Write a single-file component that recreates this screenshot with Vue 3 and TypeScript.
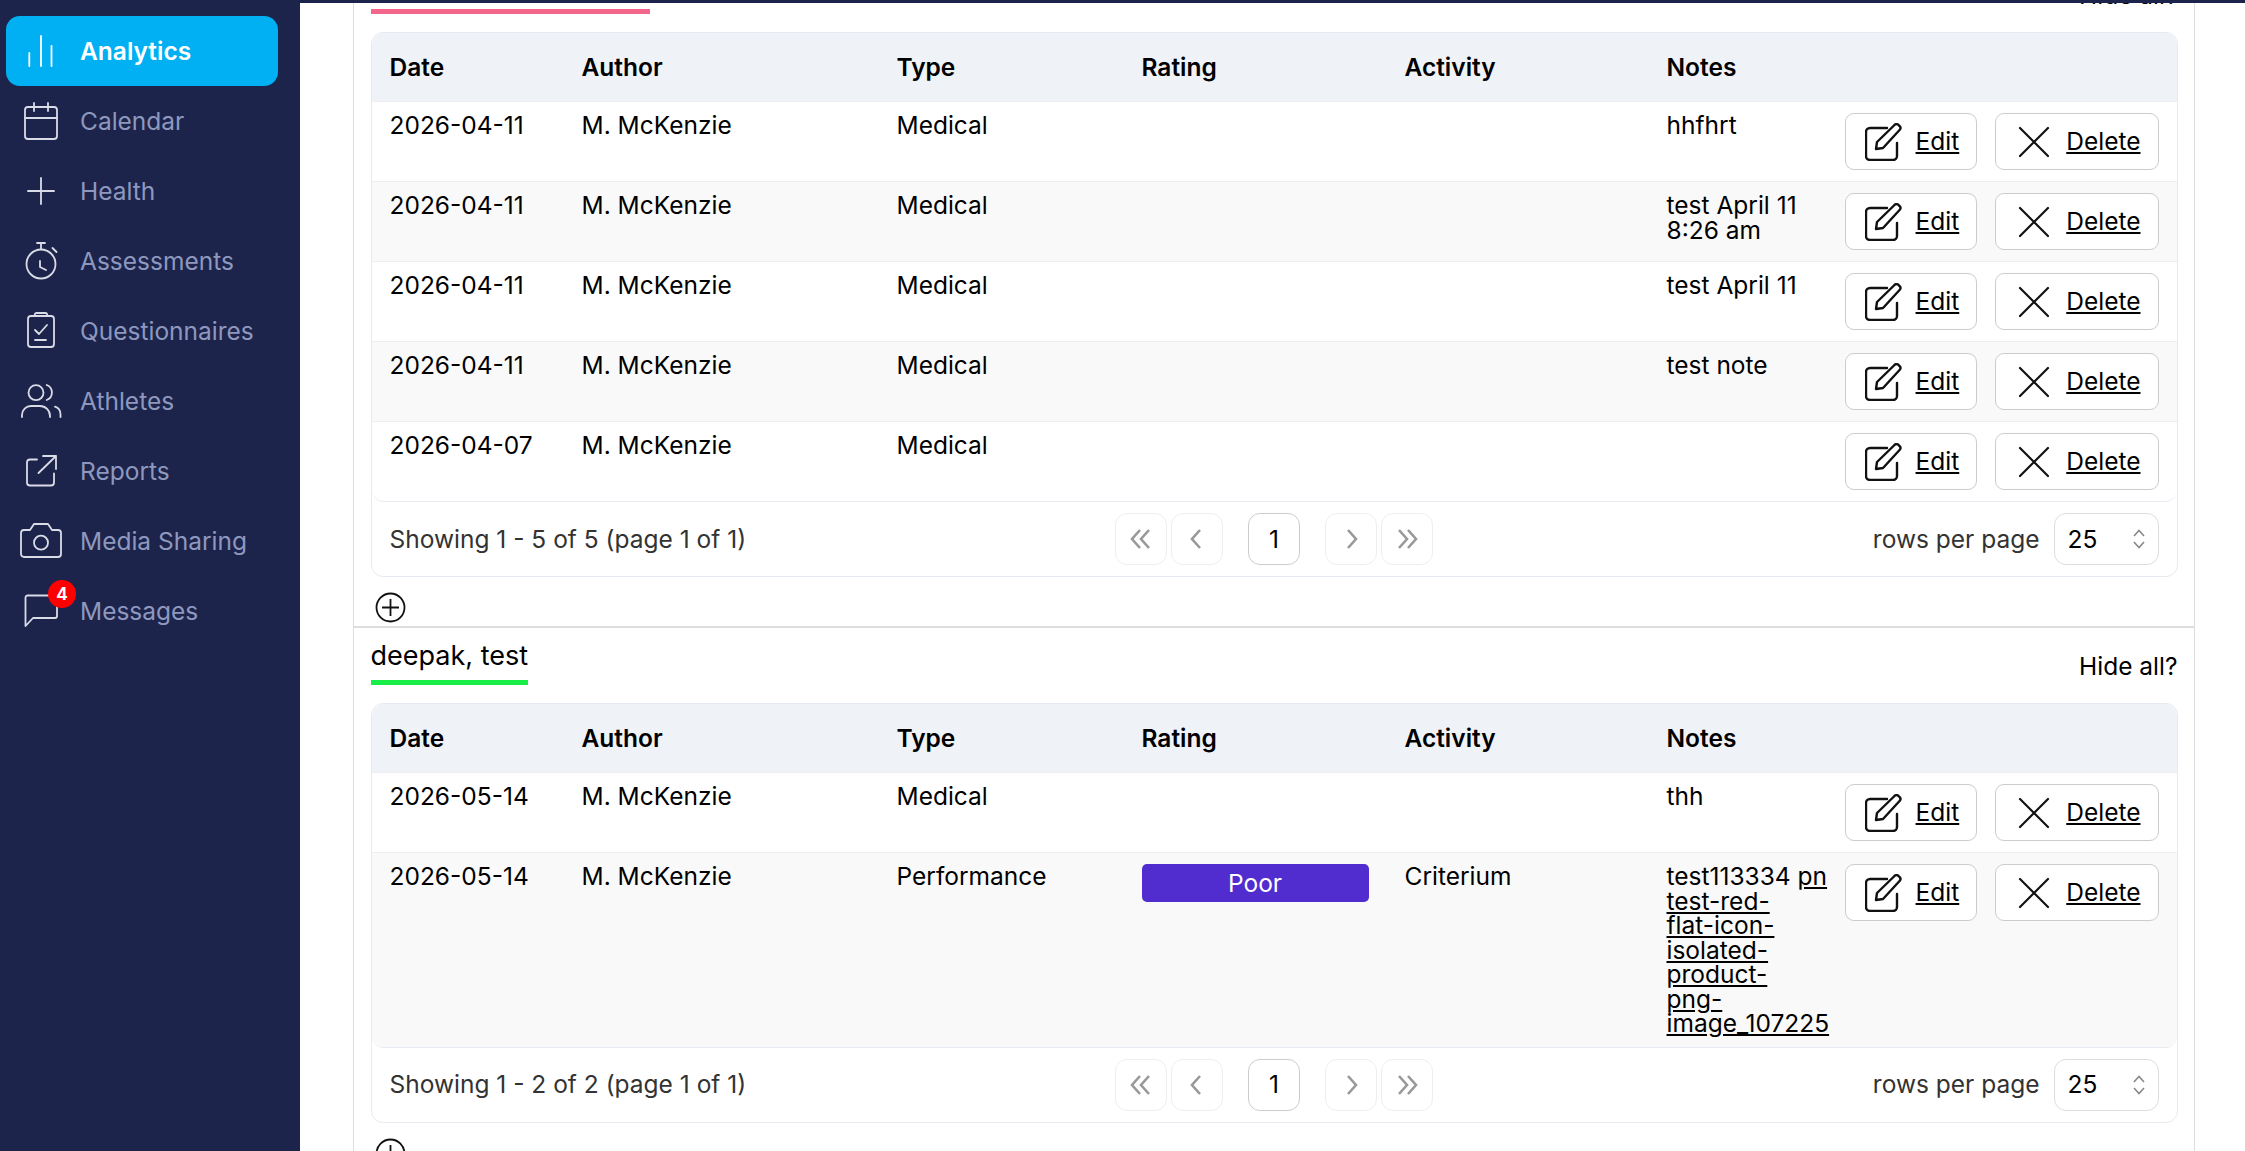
<script setup lang="ts">
interface Row {
  date: string;
  type: string;
  rating?: string;
  activity?: string;
  note?: string;
  link?: string[];
}

interface Section {
  name: string;
  color: string;
  lineWidth?: number;
  total: number;
  rows: Row[];
}

const navItems = ['Analytics', 'Calendar', 'Health', 'Assessments', 'Questionnaires', 'Athletes', 'Reports', 'Media Sharing', 'Messages'];

const columns = ['Date', 'Author', 'Type', 'Rating', 'Activity', 'Notes', ''];

const sections: Section[] = [
  {
    name: '',
    color: '#f5668c',
    lineWidth: 279,
    total: 5,
    rows: [
      { date: '2026-04-11', type: 'Medical', note: 'hhfhrt' },
      { date: '2026-04-11', type: 'Medical', note: 'test April 11 8:26 am' },
      { date: '2026-04-11', type: 'Medical', note: 'test April 11' },
      { date: '2026-04-11', type: 'Medical', note: 'test note' },
      { date: '2026-04-07', type: 'Medical' }
    ]
  },
  {
    name: 'deepak, test',
    color: '#18ee47',
    total: 2,
    rows: [
      { date: '2026-05-14', type: 'Medical', note: 'thh' },
      {
        date: '2026-05-14',
        type: 'Performance',
        rating: 'Poor',
        activity: 'Criterium',
        note: 'test113334',
        link: ['pn', 'test-red-', 'flat-icon-', 'isolated-', 'product-', 'png-', 'image_107225']
      }
    ]
  }
];
</script>

<template>
  <div class="app">
    <aside class="sidebar">
      <a v-for="(item, i) in navItems" :key="item" class="nav-item" :class="{ active: i === 0 }">
        <span class="nav-icon">
          <svg width="44" height="44" viewBox="0 0 44 44" fill="none" stroke="currentColor" stroke-width="1.8" stroke-linecap="round" stroke-linejoin="round">
            <template v-if="item === 'Analytics'">
              <path d="M10.3 24v13M22 7v30M32.5 17v20" />
            </template>
            <template v-else-if="item === 'Calendar'">
              <rect x="6" y="8" width="32" height="32" rx="3" />
              <path d="M6 19h32M15 4v8M29 4v8" />
            </template>
            <template v-else-if="item === 'Health'">
              <path d="M22 9v26M9 22h26" />
            </template>
            <template v-else-if="item === 'Assessments'">
              <circle cx="22" cy="25" r="14.5" />
              <path d="M18 4h8M22 4v6M33.5 9l4 4M21 22v6l6 3" />
            </template>
            <template v-else-if="item === 'Questionnaires'">
              <rect x="9" y="7" width="26" height="31" rx="3" />
              <path d="M16 7a2 2 0 0 1 2-3h8a2 2 0 0 1 2 3M16 21l4 4 8-9M16 31h11" />
            </template>
            <template v-else-if="item === 'Athletes'">
              <circle cx="17" cy="13.7" r="7.5" />
              <path d="M27.7 6a8 8 0 0 1 0 15M3 38v-2a9 9 0 0 1 9-9h9a10 10 0 0 1 10 10v1M36 27.7a8 8 0 0 1 5.5 7.7V38" />
            </template>
            <template v-else-if="item === 'Reports'">
              <path d="M18 10.5h-7a3 3 0 0 0-3 3v20a3 3 0 0 0 3 3h21a3 3 0 0 0 3-3v-9M19.5 24L37 7M24 7h13v13" />
            </template>
            <template v-else-if="item === 'Media Sharing'">
              <path d="M2 14a3 3 0 0 1 3-3h6l4-6h14l4 6h6a3 3 0 0 1 3 3v21a3 3 0 0 1-3 3H5a3 3 0 0 1-3-3z" />
              <circle cx="22" cy="23.7" r="7" />
            </template>
            <template v-else>
              <path d="M8.5 6.5H36a2 2 0 0 1 2 2V27a2 2 0 0 1-2 2H14l-7.5 8V8.5a2 2 0 0 1 2-2z" />
            </template>
          </svg>
          <span v-if="item === 'Messages'" class="nav-badge">4</span>
        </span>
        <span>{{ item }}</span>
      </a>
    </aside>

    <main class="main">
      <div class="topbar"></div>
      <div class="content">
        <div class="card">
          <section v-for="section in sections" :key="section.color" class="section">
            <header class="section-head">
              <h2 class="section-name" :style="{ borderColor: section.color, width: section.lineWidth ? section.lineWidth + 'px' : 'auto' }">{{ section.name }}</h2>
              <a class="hide-all">Hide all?</a>
            </header>

            <div class="table-box">
              <div class="table-inner">
                <table class="table">
                  <colgroup>
                    <col class="col-date" />
                    <col class="col-author" />
                    <col class="col-type" />
                    <col class="col-rating" />
                    <col class="col-activity" />
                    <col class="col-notes" />
                    <col />
                  </colgroup>
                  <thead>
                    <tr>
                      <th v-for="col in columns" :key="col">{{ col }}</th>
                    </tr>
                  </thead>
                  <tbody>
                    <tr v-for="(row, r) in section.rows" :key="r">
                      <td>{{ row.date }}</td>
                      <td>M. McKenzie</td>
                      <td>{{ row.type }}</td>
                      <td><div v-if="row.rating" class="rating">{{ row.rating }}</div></td>
                      <td>{{ row.activity }}</td>
                      <td class="notes">
                        {{ row.note }}
                        <a v-if="row.link" class="file-link"><template v-for="(part, p) in row.link" :key="p"><br v-if="p > 0" />{{ part }}</template></a>
                      </td>
                      <td>
                        <div class="actions">
                          <button type="button" class="btn">
                            <svg width="38" height="38" viewBox="0 0 38 38" fill="none" stroke="#111" stroke-width="2.4" stroke-linecap="round" stroke-linejoin="round">
                              <path d="M22 5H5a4 4 0 0 0-4 4v24a4 4 0 0 0 4 4h23a4 4 0 0 0 4-4V20" />
                              <path d="M11 26l1-7L29 2.500a3 3 0 0 1 5 0 3 3 0 0 1 1 4L18 25z" />
                            </svg>
                            <span>Edit</span>
                          </button>
                          <button type="button" class="btn">
                            <svg width="38" height="38" viewBox="0 0 38 38" fill="none" stroke="#111" stroke-width="2.2" stroke-linecap="round">
                              <path d="M5 5l28 28M33 5L5 33" />
                            </svg>
                            <span>Delete</span>
                          </button>
                        </div>
                      </td>
                    </tr>
                  </tbody>
                </table>
              </div>

              <div class="pager">
                <span class="pager-info">Showing 1 - {{ section.total }} of {{ section.total }} (page 1 of 1)</span>
                <div class="pager-buttons">
                  <span class="page-btn">
                    <svg width="24" height="24" viewBox="0 0 24 24" fill="none" stroke="#999" stroke-width="2.6"><path d="M11 3l-8 9 8 9M20 3l-8 9 8 9" /></svg>
                  </span>
                  <span class="page-btn">
                    <svg width="24" height="24" viewBox="0 0 24 24" fill="none" stroke="#999" stroke-width="2.6"><path d="M15 3l-8 9 8 9" /></svg>
                  </span>
                  <span class="page-btn current">1</span>
                  <span class="page-btn">
                    <svg width="24" height="24" viewBox="0 0 24 24" fill="none" stroke="#999" stroke-width="2.6"><path d="M9 3l8 9-8 9" /></svg>
                  </span>
                  <span class="page-btn">
                    <svg width="24" height="24" viewBox="0 0 24 24" fill="none" stroke="#999" stroke-width="2.6"><path d="M4 3l8 9-8 9M13 3l8 9-8 9" /></svg>
                  </span>
                </div>
                <div class="pager-size">
                  <span>rows per page</span>
                  <div class="size-select">
                    <span>25</span>
                    <svg width="12" height="20" viewBox="0 0 12 20" fill="none" stroke="#888" stroke-width="1.6"><path d="M1 7l5-5.500L11 7M1 13l5 5.500L11 13" /></svg>
                  </div>
                </div>
              </div>
            </div>

            <div class="add-row">
              <svg width="31" height="31" viewBox="0 0 31 31" fill="none" stroke="#111" stroke-width="1.8">
                <circle cx="15.500" cy="15.500" r="14" />
                <path d="M15.500 7v17M7 15.500h17" />
              </svg>
            </div>
          </section>
        </div>
      </div>
    </main>
  </div>
</template>

<style>
html,
body {
  margin: 0;
  overflow: hidden;
  background: #fff;
}
</style>

<style scoped>
.app {
  display: flex;
  height: 100vh;
  font-family: Inter, "Liberation Sans", sans-serif;
  font-size: 24.5px;
  line-height: 24.5px;
  color: #000;
}

.sidebar {
  flex: 0 0 300px;
  box-sizing: border-box;
  padding: 16px 22px 0 6px;
  background: #1c244b;
  color: #8e98bf;
}

.nav-item {
  display: flex;
  align-items: center;
  gap: 17px;
  height: 70px;
  padding-left: 13px;
  border-radius: 14px;
}

.nav-item.active {
  background: #00b0f2;
  color: #fff;
  font-weight: 600;
}

.nav-icon {
  position: relative;
  display: block;
  width: 44px;
  height: 44px;
  color: #d9dce6;
}

.nav-item.active .nav-icon {
  color: #fff;
}

.nav-badge {
  position: absolute;
  top: -9px;
  left: 29px;
  width: 28px;
  height: 28px;
  border-radius: 50%;
  background: #ff0000;
  color: #fff;
  font-size: 17px;
  font-weight: 700;
  line-height: 28px;
  text-align: center;
}

.main {
  flex: 1;
  min-width: 0;
  display: flex;
  flex-direction: column;
}

.topbar {
  flex: 0 0 3px;
  background: #1c244b;
}

.content {
  flex: 1;
  min-height: 0;
  overflow: hidden;
  padding: 0 50px 0 53px;
}

.card {
  box-sizing: border-box;
  margin-top: -46px;
  border-left: 1.5px solid #ddd;
  border-right: 1.5px solid #ddd;
}

.section {
  padding: 0 16.5px;
  border-bottom: 2px solid #ddd;
}

.section-head {
  display: flex;
  align-items: flex-end;
  justify-content: space-between;
  padding-top: 12px;
  margin-bottom: 18px;
}

.section-name {
  box-sizing: border-box;
  height: 45px;
  margin: 0;
  padding-top: 0;
  border-bottom: 5px solid;
  font-size: 27px;
  font-weight: 400;
  line-height: 32px;
}

.hide-all {
  margin-bottom: 7px;
}

.table-box {
  border: 1.5px solid #e6eaf1;
  border-radius: 12px;
}

.table-inner {
  overflow: hidden;
  border-bottom: 1.5px solid #e6eaf1;
  border-radius: 12px;
}

.table {
  width: 100%;
  border-collapse: collapse;
  table-layout: fixed;
}

.col-date { width: 192px; }
.col-author { width: 315px; }
.col-type { width: 245px; }
.col-rating { width: 263px; }
.col-activity { width: 262px; }
.col-notes { width: 190px; }

th {
  height: 68px;
  padding: 0 0 0 18px;
  background: #eff2f7;
  font-weight: 600;
  text-align: left;
}

td {
  padding: 11px 18px;
  border-top: 1px solid #eceef2;
  vertical-align: top;
}

tbody tr:nth-child(even) td {
  background: #f9f9f9;
}

td.notes {
  padding-right: 9px;
}

.file-link {
  text-decoration: underline;
  white-space: nowrap;
}

.rating {
  height: 38px;
  border-radius: 5px;
  background: #512dd0;
  color: #fff;
  line-height: 38px;
  text-align: center;
}

.actions {
  display: flex;
  justify-content: flex-end;
  gap: 18px;
}

.btn {
  display: flex;
  align-items: center;
  gap: 13px;
  box-sizing: border-box;
  height: 57px;
  padding: 0 17px 0 19px;
  border: 1.5px solid #ccc;
  border-radius: 9px;
  background: #fff;
  color: #000;
  font: inherit;
  text-decoration: underline;
}

.pager {
  display: grid;
  grid-template-columns: 1fr auto 1fr;
  align-items: center;
  height: 74px;
  padding: 0 18px;
  color: #333;
}

.pager-buttons {
  display: flex;
  gap: 3.5px;
}

.page-btn {
  display: flex;
  align-items: center;
  justify-content: center;
  box-sizing: border-box;
  width: 52.500px;
  height: 52px;
  border: 1.5px solid #eee;
  border-radius: 12px;
  color: #000;
}

.page-btn.current {
  margin: 0 21px;
  border-color: #ccc;
}

.pager-size {
  display: flex;
  align-items: center;
  justify-content: flex-end;
  gap: 14px;
}

.size-select {
  display: flex;
  align-items: center;
  justify-content: space-between;
  box-sizing: border-box;
  width: 105px;
  height: 52px;
  padding: 0 13px;
  border: 1.5px solid #ddd;
  border-radius: 12px;
  color: #000;
}

.add-row {
  display: flex;
  height: 49px;
  padding: 15px 0 0 4px;
  box-sizing: border-box;
}
</style>
